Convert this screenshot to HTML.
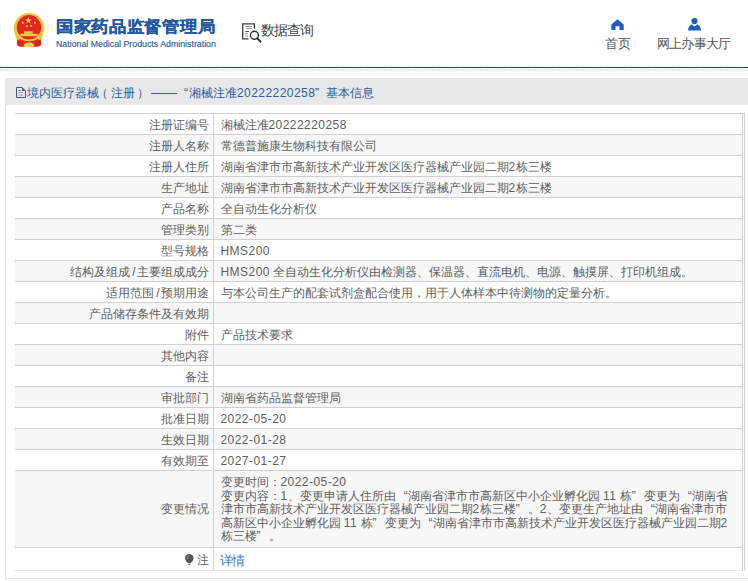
<!DOCTYPE html>
<html><head><meta charset="utf-8">
<style>
*{margin:0;padding:0;box-sizing:border-box}
html,body{width:748px;height:583px;overflow:hidden;background:#fff;font-family:"Liberation Sans",sans-serif;color:#555}
.hdr{position:absolute;left:0;top:0;width:748px;height:67px;background:#fff}
.emb{position:absolute;left:0;top:0}
.t1{position:absolute;left:56px;top:16px;font-size:17px;letter-spacing:0.7px;font-weight:bold;color:#2357a5;white-space:nowrap;transform:scaleY(0.92);transform-origin:0 0;-webkit-text-stroke:0.25px #2357a5}
.t2{position:absolute;left:56px;top:39px;font-size:8.8px;color:#2a5ba3;white-space:nowrap;-webkit-text-stroke:0.15px #2a5ba3}
.q{position:absolute;left:242px;top:22px;font-size:14px;color:#444;white-space:nowrap}
.qi{position:absolute;left:236px;top:16px}
.qt{position:absolute;left:261px;top:22px;font-size:14px;letter-spacing:-1px;color:#444}
.nav{position:absolute;font-size:13px;line-height:16px;color:#555;white-space:nowrap}
.ico{position:absolute}
.line{position:absolute;left:0;top:67px;width:748px;height:1px;background:#1f4b80}
.hatch{position:absolute;left:0;top:69px;width:748px;height:1px;background:repeating-linear-gradient(90deg,transparent 0 1px,#d6d6d6 1px 2px,transparent 2px 3px)}
.hatch2{position:absolute;left:0;top:70px;width:748px;height:1px;background:repeating-linear-gradient(90deg,#d6d6d6 0 1px,transparent 1px 3px)}
.halo{position:absolute;left:0;top:66px;width:748px;height:1px;background:#eef9fc}
.panel{position:absolute;left:5px;top:78px;width:743px;height:501px;border-left:1px solid #e3e3e3;border-bottom:1px solid #e3e3e3;background:#fff}
.ph{position:absolute;left:-1px;top:0;width:744px;height:27px;background:#e8e8e8;font-size:12px;color:#2a5ca5;white-space:nowrap}
.di{position:absolute;left:11px;top:9px}
.pt{position:absolute;top:8px;line-height:15px}
.dsh{font-size:13px;top:7px}
i{font-style:normal}
b.n{font-weight:normal;letter-spacing:.45px}
b.sl{font-weight:normal;margin:0 1px 0 2px}
.p1,.p2{display:inline-block;width:12px}
.dash{display:inline-block;width:24px;margin-left:4px;margin-right:8px}
.q1{display:inline-block;width:12px;text-align:right}
.q2{display:inline-block;width:12px;text-align:left}
.sp{display:inline-block;width:10px}
table{position:absolute;left:15px;top:113px;width:728px;border-collapse:collapse;font-size:12px}
td{border:1px solid #d0d0d0;height:21px;line-height:18px;padding:1px 6px 0 7px;color:#5e5e5e;vertical-align:middle;white-space:nowrap}
td:first-child{border-left:none}
td.l{width:198px;text-align:right;padding:1px 4px 0 0}
tr:nth-child(even) td{background:#f7f7f7}
td.multi{line-height:13.5px;padding-top:5px;padding-bottom:3px;height:76px}
tr.note td{height:23px;padding-top:2px}
tr.note td.link{padding-top:4px;padding-left:6px}
td.link{color:#3b7dd8;font-size:13px;letter-spacing:-1px}
.bulb{display:inline-block;vertical-align:-1px;margin-right:3px}
.rb{position:absolute;left:744px;top:113px;width:1px;height:458px;background:#d0d0d0}
.rt{position:absolute;left:742px;top:113px;width:3px;height:1px;background:#d0d0d0}
tr.note td{border-bottom-color:#e6e6e6}
</style></head><body>
<div class="hdr">
  <svg class="emb" width="60" height="60" viewBox="0 0 60 60">
    <path d="M17.5 37 L16.8 44.5 Q18 46.8 22 46.8 L36 46.8 Q40 46.8 41.2 44.5 L40.5 37Z" fill="#d9261c"/>
    <circle cx="29" cy="28.3" r="15.2" fill="#f1c33c"/>
    <circle cx="29" cy="27.3" r="12.2" fill="#e1291d"/>
    <path d="M15.5 35.5 Q29 44 42.5 35.5 L42 38.5 Q29 46.5 16 38.5Z" fill="#f1c33c"/>
    <path d="M19.5 38.8 Q29 43.8 38.5 38.8 L38.5 41.2 Q29 46.2 19.5 41.2Z" fill="#dc2a1e"/>
    <path d="M23.5 44.5 Q29 40 34.5 44.5 L33.5 47 L24.5 47Z" fill="#f3cc52"/>
    <rect x="20.3" y="33.8" width="17.4" height="2.4" fill="#f3c84a"/>
    <rect x="24" y="31.3" width="8.6" height="2.5" fill="#f3c84a"/>
    <polygon points="28.4,17.3 29.3,19.6 31.7,19.6 29.8,21.1 30.5,23.4 28.4,22 26.3,23.4 27,21.1 25.1,19.6 27.5,19.6" fill="#f7d34d"/>
    <circle cx="22.8" cy="22.7" r="1" fill="#f7d34d"/>
    <circle cx="26.9" cy="26.3" r="1" fill="#f7d34d"/>
    <circle cx="31.1" cy="26" r="1" fill="#f7d34d"/>
    <circle cx="34.9" cy="22.7" r="1" fill="#f7d34d"/>
  </svg>
  <div class="t1">国家药品监督管理局</div>
  <div class="t2">National Medical Products Administration</div>
  <svg class="qi" width="30" height="30" viewBox="0 0 30 30">
    <path d="M12.5 22.9 H6.7 V7.8 H18.4 V12.8" fill="none" stroke="#3a3a3a" stroke-width="1.3"/>
    <line x1="9.3" y1="10.5" x2="16" y2="10.5" stroke="#888" stroke-width="1"/>
    <line x1="9.3" y1="12.6" x2="16" y2="12.6" stroke="#999" stroke-width="1"/>
    <line x1="9.3" y1="15.5" x2="13" y2="15.5" stroke="#555" stroke-width="1"/>
    <line x1="9.3" y1="17.6" x2="12" y2="17.6" stroke="#888" stroke-width="1"/>
    <line x1="9.3" y1="20" x2="12" y2="20" stroke="#888" stroke-width="1"/>
    <circle cx="18.4" cy="19.3" r="4" fill="#fff" stroke="#2e2e2e" stroke-width="1.4"/>
    <line x1="21.2" y1="22.2" x2="24.6" y2="25.6" stroke="#2e2e2e" stroke-width="2" stroke-linecap="round"/>
  </svg>
  <div class="qt">数据查询</div>
  <svg class="ico" style="left:611px;top:19px" width="13" height="11" viewBox="0 0 13 11"><path d="M6.5 0.3 L12.7 5.6 V11 H8.5 V7.2 H4.5 V11 H0.3 V5.6Z" fill="#1f5cbc"/></svg>
  <div class="nav" style="left:605px;top:36px">首页</div>
  <svg class="ico" style="left:688px;top:18px" width="13" height="13" viewBox="0 0 13 13"><circle cx="6.5" cy="3.1" r="3.1" fill="#1f5cbc"/><path d="M0 12.5 Q0.5 7.2 4.2 6.6 L6.5 8.6 L8.8 6.6 Q12.5 7.2 13 12.5Z" fill="#1f5cbc"/></svg>
  <div class="nav" style="left:657px;top:36px;letter-spacing:-0.8px">网上办事大厅</div>
</div>
<div class="line"></div>
<div class="halo"></div><div class="hatch"></div><div class="hatch2"></div>
<div class="panel">
  <div class="ph"><svg class="di" width="10" height="11" viewBox="0 0 10 11"><path d="M0.5 0.5 H6 L9.5 4 V10.5 H0.5Z" fill="none" stroke="#3b5593" stroke-width="1"/><path d="M6 0.5 L9.5 4 H6Z" fill="#3b5593"/><line x1="2.5" y1="3.5" x2="4.5" y2="3.5" stroke="#555" stroke-width="1"/><line x1="2.5" y1="5.5" x2="7" y2="5.5" stroke="#8a93b0" stroke-width="1"/><line x1="2.5" y1="8" x2="7" y2="8" stroke="#a08a8a" stroke-width="1"/></svg><span class="pt" style="left:22px">境内医疗器械</span><span class="pt" style="left:91px">（</span><span class="pt" style="left:106px">注册</span><span class="pt" style="left:132px">）</span><span class="pt dsh" style="left:146px">——</span><span class="pt" style="left:179px">“</span><span class="pt" style="left:184px">湘械注准<b class="n">20222220258</b></span><span class="pt" style="left:310px">”</span><span class="pt" style="left:321px">基本信息</span></div>
</div>
<table>
    <tr><td class="l">注册证编号</td><td>湘械注准<b class="n">20222220258</b></td></tr>
    <tr><td class="l">注册人名称</td><td>常德普施康生物科技有限公司</td></tr>
    <tr><td class="l">注册人住所</td><td>湖南省津市市高新技术产业开发区医疗器械产业园二期<b class="n">2</b>栋三楼</td></tr>
    <tr><td class="l">生产地址</td><td>湖南省津市市高新技术产业开发区医疗器械产业园二期<b class="n">2</b>栋三楼</td></tr>
    <tr><td class="l">产品名称</td><td>全自动生化分析仪</td></tr>
    <tr><td class="l">管理类别</td><td>第二类</td></tr>
    <tr><td class="l">型号规格</td><td><b class="n">HMS200</b></td></tr>
    <tr><td class="l">结构及组成<b class="sl">/</b>主要组成成分</td><td><b class="n">HMS200</b> 全自动生化分析仪由检测器、保温器、直流电机、电源、触摸屏、打印机组成。</td></tr>
    <tr><td class="l">适用范围<b class="sl">/</b>预期用途</td><td>与本公司生产的配套试剂盒配合使用，用于人体样本中待测物的定量分析。</td></tr>
    <tr><td class="l">产品储存条件及有效期</td><td></td></tr>
    <tr><td class="l">附件</td><td>产品技术要求</td></tr>
    <tr><td class="l">其他内容</td><td></td></tr>
    <tr><td class="l">备注</td><td></td></tr>
    <tr><td class="l">审批部门</td><td>湖南省药品监督管理局</td></tr>
    <tr><td class="l">批准日期</td><td><b class="n">2022-05-20</b></td></tr>
    <tr><td class="l">生效日期</td><td><b class="n">2022-01-28</b></td></tr>
    <tr><td class="l">有效期至</td><td><b class="n">2027-01-27</b></td></tr>
    <tr class="bg"><td class="l">变更情况</td><td class="multi"><div>变更时间：<b class="n">2022-05-20</b></div><div>变更内容：<b class="n">1</b>、变更申请人住所由<i class="q1">“</i>湖南省津市市高新区中小企业孵化园 <b class="n">11</b> 栋<i class="q2">”</i>变更为<i class="q1">“</i>湖南省</div><div>津市市高新技术产业开发区医疗器械产业园二期<b class="n">2</b>栋三楼<i class="q2">”</i>。<b class="n">2</b>、变更生产地址由<i class="q1">“</i>湖南省津市市</div><div>高新区中小企业孵化园 <b class="n">11</b> 栋<i class="q2">”</i>变更为<i class="q1">“</i>湖南省津市市高新技术产业开发区医疗器械产业园二期<b class="n">2</b></div><div>栋三楼<i class="q2">”</i>。</div></td></tr>
    <tr class="note"><td class="l"><svg class="bulb" width="9" height="11" viewBox="0 0 9 11"><circle cx="4.3" cy="4.2" r="4.2" fill="#545454"/><path d="M1 6.6 L2.9 9.3 H5.7 L7.6 6.6Z" fill="#545454"/><rect x="3.3" y="10.1" width="2" height="0.9" fill="#666"/><path d="M1.9 5.2 Q1.9 2.6 3.9 1.6" fill="none" stroke="#aaa" stroke-width="0.8"/></svg>注</td><td class="link">详情</td></tr>
</table>
<div class="rb"></div><div class="rt"></div>
</body></html>
